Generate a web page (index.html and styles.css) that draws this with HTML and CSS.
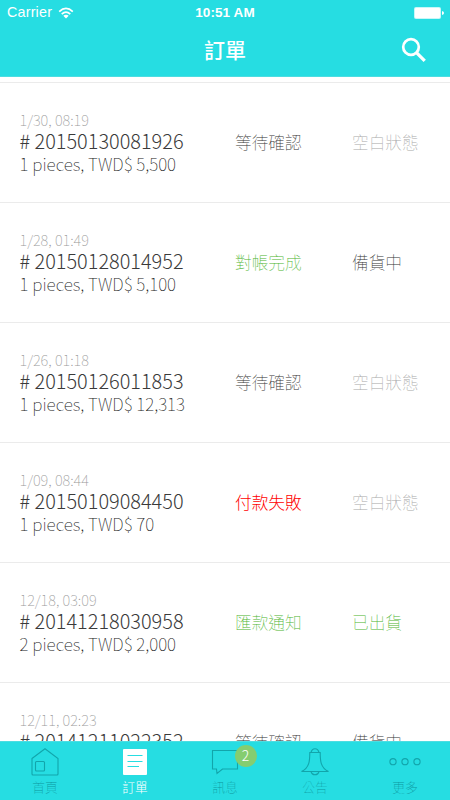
FILE: index.html
```html
<!DOCTYPE html>
<html lang="zh-TW">
<head>
<meta charset="utf-8">
<title>訂單</title>
<link rel="stylesheet" href="styles.css">
</head>
<body>
<div class="app">
  <header class="header">
    <div class="status">
      <div class="carrier">Carrier
        <svg width="16" height="12" viewBox="0 0 16 12" fill="none" stroke="#fff" stroke-width="1.7"><path d="M1.2 4.6Q8-1.8 14.8 4.6M3.7 7.1Q8 3.2 12.3 7.1"/><path d="M5.3 8.7Q8 6.6 10.700 8.700L8 11.5z" fill="#fff" stroke="none"/></svg>
      </div>
      <div class="clock">10:51 AM</div>
      <svg class="battery" width="30" height="12" viewBox="0 0 30 12"><rect width="27" height="12" rx="2" fill="#fff" opacity=".75"/><rect x="1" y="1" width="25" height="10" rx="1" fill="#fff"/><path d="M28 4q2 .3 2 2t-2 2z" fill="#fff"/></svg>
    </div>
    <div class="nav">
      <h1 class="title">訂單</h1>
      <svg class="search" width="26" height="26" viewBox="0 0 26 26" fill="none" stroke="#fff"><circle cx="10" cy="10" r="7.800" stroke-width="2.700"/><path d="M15.700 15.900L23.700 23.900" stroke-width="3.300"/></svg>
    </div>
  </header>

  <main class="orders">
    <article class="order">
      <div class="info"><p class="date">1/30, 08:19</p><p class="number"># 20150130081926</p><p class="total">1 pieces, TWD$ 5,500</p></div>
      <span class="state">等待確認</span><span class="state empty">空白狀態</span>
    </article>
    <article class="order">
      <div class="info"><p class="date">1/28, 01:49</p><p class="number"># 20150128014952</p><p class="total">1 pieces, TWD$ 5,100</p></div>
      <span class="state done">對帳完成</span><span class="state">備貨中</span>
    </article>
    <article class="order">
      <div class="info"><p class="date">1/26, 01:18</p><p class="number"># 20150126011853</p><p class="total">1 pieces, TWD$ 12,313</p></div>
      <span class="state">等待確認</span><span class="state empty">空白狀態</span>
    </article>
    <article class="order">
      <div class="info"><p class="date">1/09, 08:44</p><p class="number"># 20150109084450</p><p class="total">1 pieces, TWD$ 70</p></div>
      <span class="state failed">付款失敗</span><span class="state empty">空白狀態</span>
    </article>
    <article class="order">
      <div class="info"><p class="date">12/18, 03:09</p><p class="number"># 20141218030958</p><p class="total">2 pieces, TWD$ 2,000</p></div>
      <span class="state done">匯款通知</span><span class="state done">已出貨</span>
    </article>
    <article class="order">
      <div class="info"><p class="date">12/11, 02:23</p><p class="number"># 20141211022352</p></div>
      <span class="state">等待確認</span><span class="state">備貨中</span>
    </article>
  </main>

  <nav class="tabs">
    <div class="tab">
      <svg width="30" height="30" viewBox="0 0 30 30"><path d="M2 10.500L15 .700l13 9.800V26q0 1-1 1H3q-1 0-1-1z"/><rect x="5.500" y="13.500" width="9" height="9.500" rx="1"/></svg>
      <span>首頁</span>
    </div>
    <div class="tab active">
      <svg width="30" height="30" viewBox="0 0 30 30"><rect x="3" y="1" width="24" height="26" rx="1" fill="#fff" stroke="none"/><path d="M7.500 7.500h15M7.500 13.500h15M7.500 18.500h11.500" stroke="#26dde2"/></svg>
      <span>訂單</span>
    </div>
    <div class="tab">
      <svg width="30" height="30" viewBox="0 0 30 30"><path d="M2.500 2.500h25v18.500H12.500L7 25.500 6.500 21h-4z"/></svg>
      <b class="badge">2</b>
      <span>訊息</span>
    </div>
    <div class="tab">
      <svg width="30" height="30" viewBox="0 0 30 30"><path d="M9.800 4.500h10.400C20.200 12.500 20.500 20 28.500 23.500h-27C9.500 20 9.800 12.500 9.800 4.500zM11 4.500Q12 .700 15 .700t4 3.800M11 23.500q.8 3.200 4 3.200t4-3.200"/></svg>
      <span>公告</span>
    </div>
    <div class="tab">
      <svg width="34" height="30" viewBox="0 0 34 30"><circle cx="5" cy="13.700" r="3.100"/><circle cx="17" cy="13.700" r="3.100"/><circle cx="29" cy="13.700" r="3.100"/></svg>
      <span>更多</span>
    </div>
  </nav>
</div>
</body>
</html>
```

FILE: styles.css
```css
* { box-sizing: border-box; }
body, p, h1 { margin: 0; }
body {
  background: #fff;
  font-family: "Noto Sans CJK TC", sans-serif;
  overflow: hidden;
}
svg { display: block; flex: none; }
.app {
  width: 450px;
  height: 800px;
  display: flex;
  flex-direction: column;
}
.header {
  flex: none;
  height: 77px;
  background: #26dde2;
  border-bottom: 1px solid #4cdde1;
  color: #fff;
}
.status {
  height: 25px;
  padding: 0 7px;
  display: grid;
  grid-template-columns: 1fr auto 1fr;
  align-items: center;
  font: 14.3px/25px "Liberation Sans", sans-serif;
}
.carrier { display: flex; align-items: center; gap: 6px; letter-spacing: .2px; }
.clock { font-weight: 700; font-size: 13.5px; letter-spacing: .1px; }
.battery { justify-self: end; margin-right: -1px; }
.nav {
  height: 50px;
  padding: 0 23px;
  display: grid;
  grid-template-columns: 1fr auto 1fr;
  align-items: center;
}
.title { grid-column: 2; font-size: 21px; line-height: 48px; font-weight: 500; padding-bottom: 2px; }
.search { justify-self: end; }
.orders {
  flex: 1;
  min-height: 0;
  margin-top: 5px;
  border-top: 1px solid #ebebeb;
  overflow: hidden;
}
.order {
  height: 120px;
  padding-left: 19.5px;
  border-bottom: 1px solid #ebebeb;
  display: grid;
  grid-template-columns: 215.5px 117px 1fr;
}
.info { padding-top: 26px; white-space: nowrap; }
.date { font-size: 14.7px; line-height: 21px; font-weight: 100; color: #999; }
.number { font-size: 19.9px; line-height: 22px; font-weight: 300; color: #3a3a3a; }
.total { font-size: 17.15px; line-height: 23px; font-weight: 100; color: #222; }
.state { padding-top: 48px; font-size: 16.7px; line-height: 22px; font-weight: 100; color: #333; }
.empty { color: #aaa; }
.done { color: #4db52f; }
.failed { color: #f00; font-weight: 300; }
.tabs {
  flex: none;
  height: 59px;
  padding-top: 6px;
  background: #26dde2;
  border-top: 1px solid #4cdde1;
  display: grid;
  grid-template-columns: repeat(5, 1fr);
}
.tab {
  position: relative;
  display: flex;
  flex-direction: column;
  align-items: center;
  font-size: 12.7px;
  line-height: 18px;
  font-weight: 100;
  color: #0d979e;
}
.tab svg { fill: none; stroke: #12a5ab; stroke-width: 1.1; }
.tab.active { color: #fff; font-weight: 300; }
.badge {
  position: absolute;
  left: 54.5px;
  top: -3px;
  width: 22px;
  height: 22px;
  border-radius: 50%;
  background: #85cd70;
  color: #fff;
  font-size: 14px;
  line-height: 21px;
  font-weight: 300;
  text-align: center;
}
```
